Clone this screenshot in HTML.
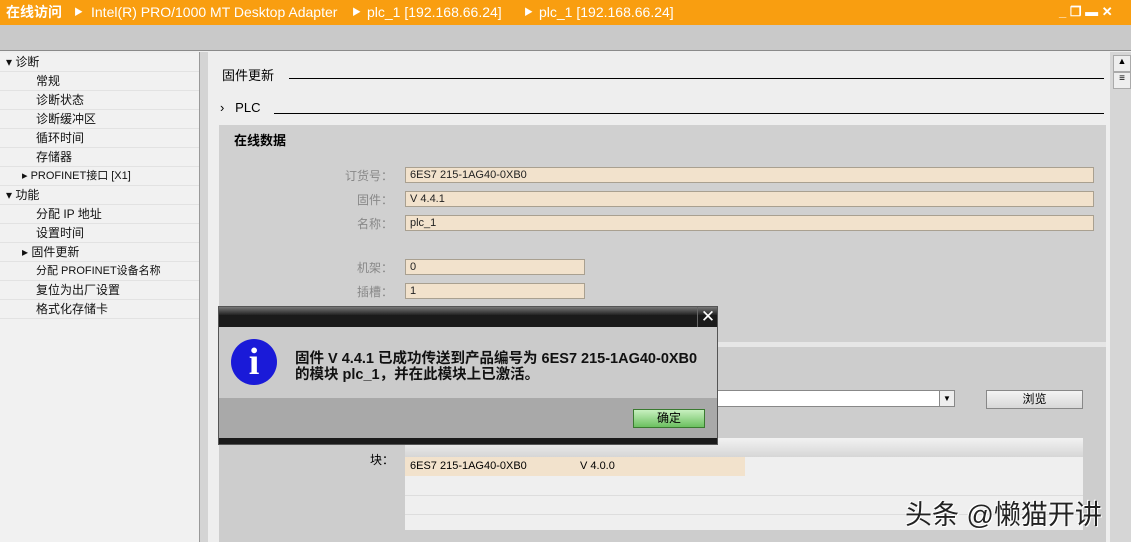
<html><head><style>
body{margin:0;width:1131px;height:542px;overflow:hidden;position:relative;font-family:"Liberation Sans","Noto Sans CJK SC",sans-serif;font-size:12px;background:#eee}
.a{position:absolute}
.fld{position:absolute;background:#f2e2cc;border:1px solid #a9a090;height:16px;box-sizing:border-box;font-size:11px;line-height:15px;padding-left:4px;color:#222}
.lb{position:absolute;width:80px;text-align:right;color:#888;font-size:12px}
.nav div{height:18px;line-height:18px;border-bottom:1px solid #e2e2e2;padding-left:36px;color:#111}
</style></head><body>
<div class="a" style="left:0;top:0;width:1131px;height:25px;background:#f99e10;color:#fff;font-size:14px;line-height:24px">
<span style="position:absolute;left:6px;font-weight:bold">在线访问</span>
<span style="position:absolute;left:74px;font-size:9px">▶</span>
<span style="position:absolute;left:91px">Intel(R) PRO/1000 MT Desktop Adapter</span>
<span style="position:absolute;left:352px;font-size:9px">▶</span>
<span style="position:absolute;left:367px">plc_1 [192.168.66.24]</span>
<span style="position:absolute;left:524px;font-size:9px">▶</span>
<span style="position:absolute;left:539px">plc_1 [192.168.66.24]</span>
<span style="position:absolute;left:1059px;top:0;font-size:13px;font-weight:bold">_ ❐ ▬ ✕</span>
</div>
<div class="a" style="left:0;top:25px;width:1131px;height:25px;background:#c9c9c9;border-bottom:1px solid #8a8a8a"></div>
<div class="a nav" style="left:0;top:53px;width:199px;height:489px;background:#f1f1f1;font-size:12px">
<div style="padding-left:6px">▾ 诊断</div><div>常规</div><div>诊断状态</div><div>诊断缓冲区</div><div>循环时间</div><div>存储器</div>
<div style="padding-left:22px;font-size:11px">▸ PROFINET接口 [X1]</div>
<div style="padding-left:6px">▾ 功能</div><div>分配 IP 地址</div><div>设置时间</div><div style="padding-left:22px">▸ 固件更新</div><div style="font-size:11px">分配 PROFINET设备名称</div><div>复位为出厂设置</div><div>格式化存储卡</div>
</div>
<div class="a" style="left:199px;top:52px;width:8px;height:490px;background:#d4d4d4;border-left:1px solid #999"></div>
<div class="a" style="left:1110px;top:52px;width:21px;height:490px;background:#d6d6d6"></div>
<div class="a" style="left:1113px;top:55px;width:16px;height:15px;background:#eee;border:1px solid #aaa;font-size:9px;text-align:center">▲</div>
<div class="a" style="left:1113px;top:72px;width:16px;height:15px;background:#eee;border:1px solid #aaa;font-size:10px;text-align:center">≡</div>
<div class="a" style="left:222px;top:65px;font-size:13px">固件更新</div>
<div class="a" style="left:289px;top:78px;width:815px;border-top:1px solid #000"></div>
<div class="a" style="left:220px;top:100px;font-size:13px">›&nbsp;&nbsp; PLC</div>
<div class="a" style="left:274px;top:113px;width:830px;border-top:1px solid #000"></div>
<div class="a" style="left:219px;top:125px;width:887px;height:220px;background:#d0d0d0"></div>
<div class="a" style="left:234px;top:130px;font-size:13px;font-weight:bold">在线数据</div>
<div class="lb" style="left:313px;top:167px">订货号：</div><div class="fld" style="left:405px;top:167px;width:689px">6ES7 215-1AG40-0XB0</div>
<div class="lb" style="left:313px;top:191px">固件：</div><div class="fld" style="left:405px;top:191px;width:689px">V 4.4.1</div>
<div class="lb" style="left:313px;top:215px">名称：</div><div class="fld" style="left:405px;top:215px;width:689px">plc_1</div>
<div class="lb" style="left:313px;top:259px">机架：</div><div class="fld" style="left:405px;top:259px;width:180px">0</div>
<div class="lb" style="left:313px;top:283px">插槽：</div><div class="fld" style="left:405px;top:283px;width:180px">1</div>
<div class="a" style="left:219px;top:342px;width:887px;height:5px;background:#e6e6e6"></div>
<div class="a" style="left:219px;top:347px;width:887px;height:195px;background:#cdcdcd"></div>
<div class="a" style="left:700px;top:390px;width:255px;height:17px;background:#fff;border:1px solid #888;box-sizing:border-box"></div>
<div class="a" style="left:939px;top:390px;width:16px;height:17px;background:#eee;border:1px solid #888;box-sizing:border-box;font-size:8px;text-align:center;line-height:15px">▼</div>
<div class="a" style="left:986px;top:390px;width:97px;height:19px;background:linear-gradient(#f4f4f4,#d8d8d8);border:1px solid #888;box-sizing:border-box;text-align:center;line-height:17px">浏览</div>
<div class="a" style="left:405px;top:438px;width:678px;height:19px;background:linear-gradient(#f2f2f2,#d6d6d6);border-bottom:1px solid #aaa"></div>
<div class="a" style="left:405px;top:457px;width:678px;height:73px;background:#efefef"></div>
<div class="a" style="left:405px;top:457px;width:340px;height:19px;background:#f2e2cc"></div>
<div class="a" style="left:405px;top:495px;width:678px;border-top:1px solid #ddd"></div>
<div class="a" style="left:405px;top:514px;width:678px;border-top:1px solid #ddd"></div>
<div class="a" style="left:410px;top:460px;font-size:11px">6ES7 215-1AG40-0XB0</div>
<div class="a" style="left:580px;top:460px;font-size:11px">V 4.0.0</div>
<div class="a" style="left:370px;top:451px;font-size:12px">块：</div>
<div class="a" style="left:905px;top:493px;font-size:27px;color:#222;text-shadow:1px 1px 0 #fff,-1px -1px 0 #fff">头条 @懒猫开讲</div>
<div class="a" style="left:218px;top:306px;width:500px;height:139px;background:#1a1a1a;border:1px solid #555;box-sizing:border-box">
<div class="a" style="left:0;top:0;width:498px;height:8px;background:linear-gradient(#777,#222)"></div>
<div class="a" style="left:478px;top:0;width:20px;height:20px;color:#fff;font-size:17px;text-align:center;line-height:20px;border-left:1px solid #666">✕</div>
<div class="a" style="left:0;top:20px;width:498px;height:71px;background:#cbcbcb"></div>
<div class="a" style="left:0;top:91px;width:498px;height:40px;background:#a9a9a9"></div>
<div class="a" style="left:12px;top:32px;width:46px;height:46px;border-radius:50%;background:#1a1ad8;color:#fff;font:bold 38px 'Liberation Serif',serif;text-align:center;line-height:46px">i</div>
<div class="a" style="left:76px;top:44px;font-size:14.5px;font-weight:bold;line-height:16px;color:#111">固件 V 4.4.1 已成功传送到产品编号为 6ES7 215-1AG40-0XB0<br>的模块 plc_1，并在此模块上已激活。</div>
<div class="a" style="left:414px;top:102px;width:72px;height:19px;background:linear-gradient(#c8f0c0,#6cc060);border:1px solid #3a7a30;box-sizing:border-box;text-align:center;line-height:17px">确定</div>
</div>
</body></html>
